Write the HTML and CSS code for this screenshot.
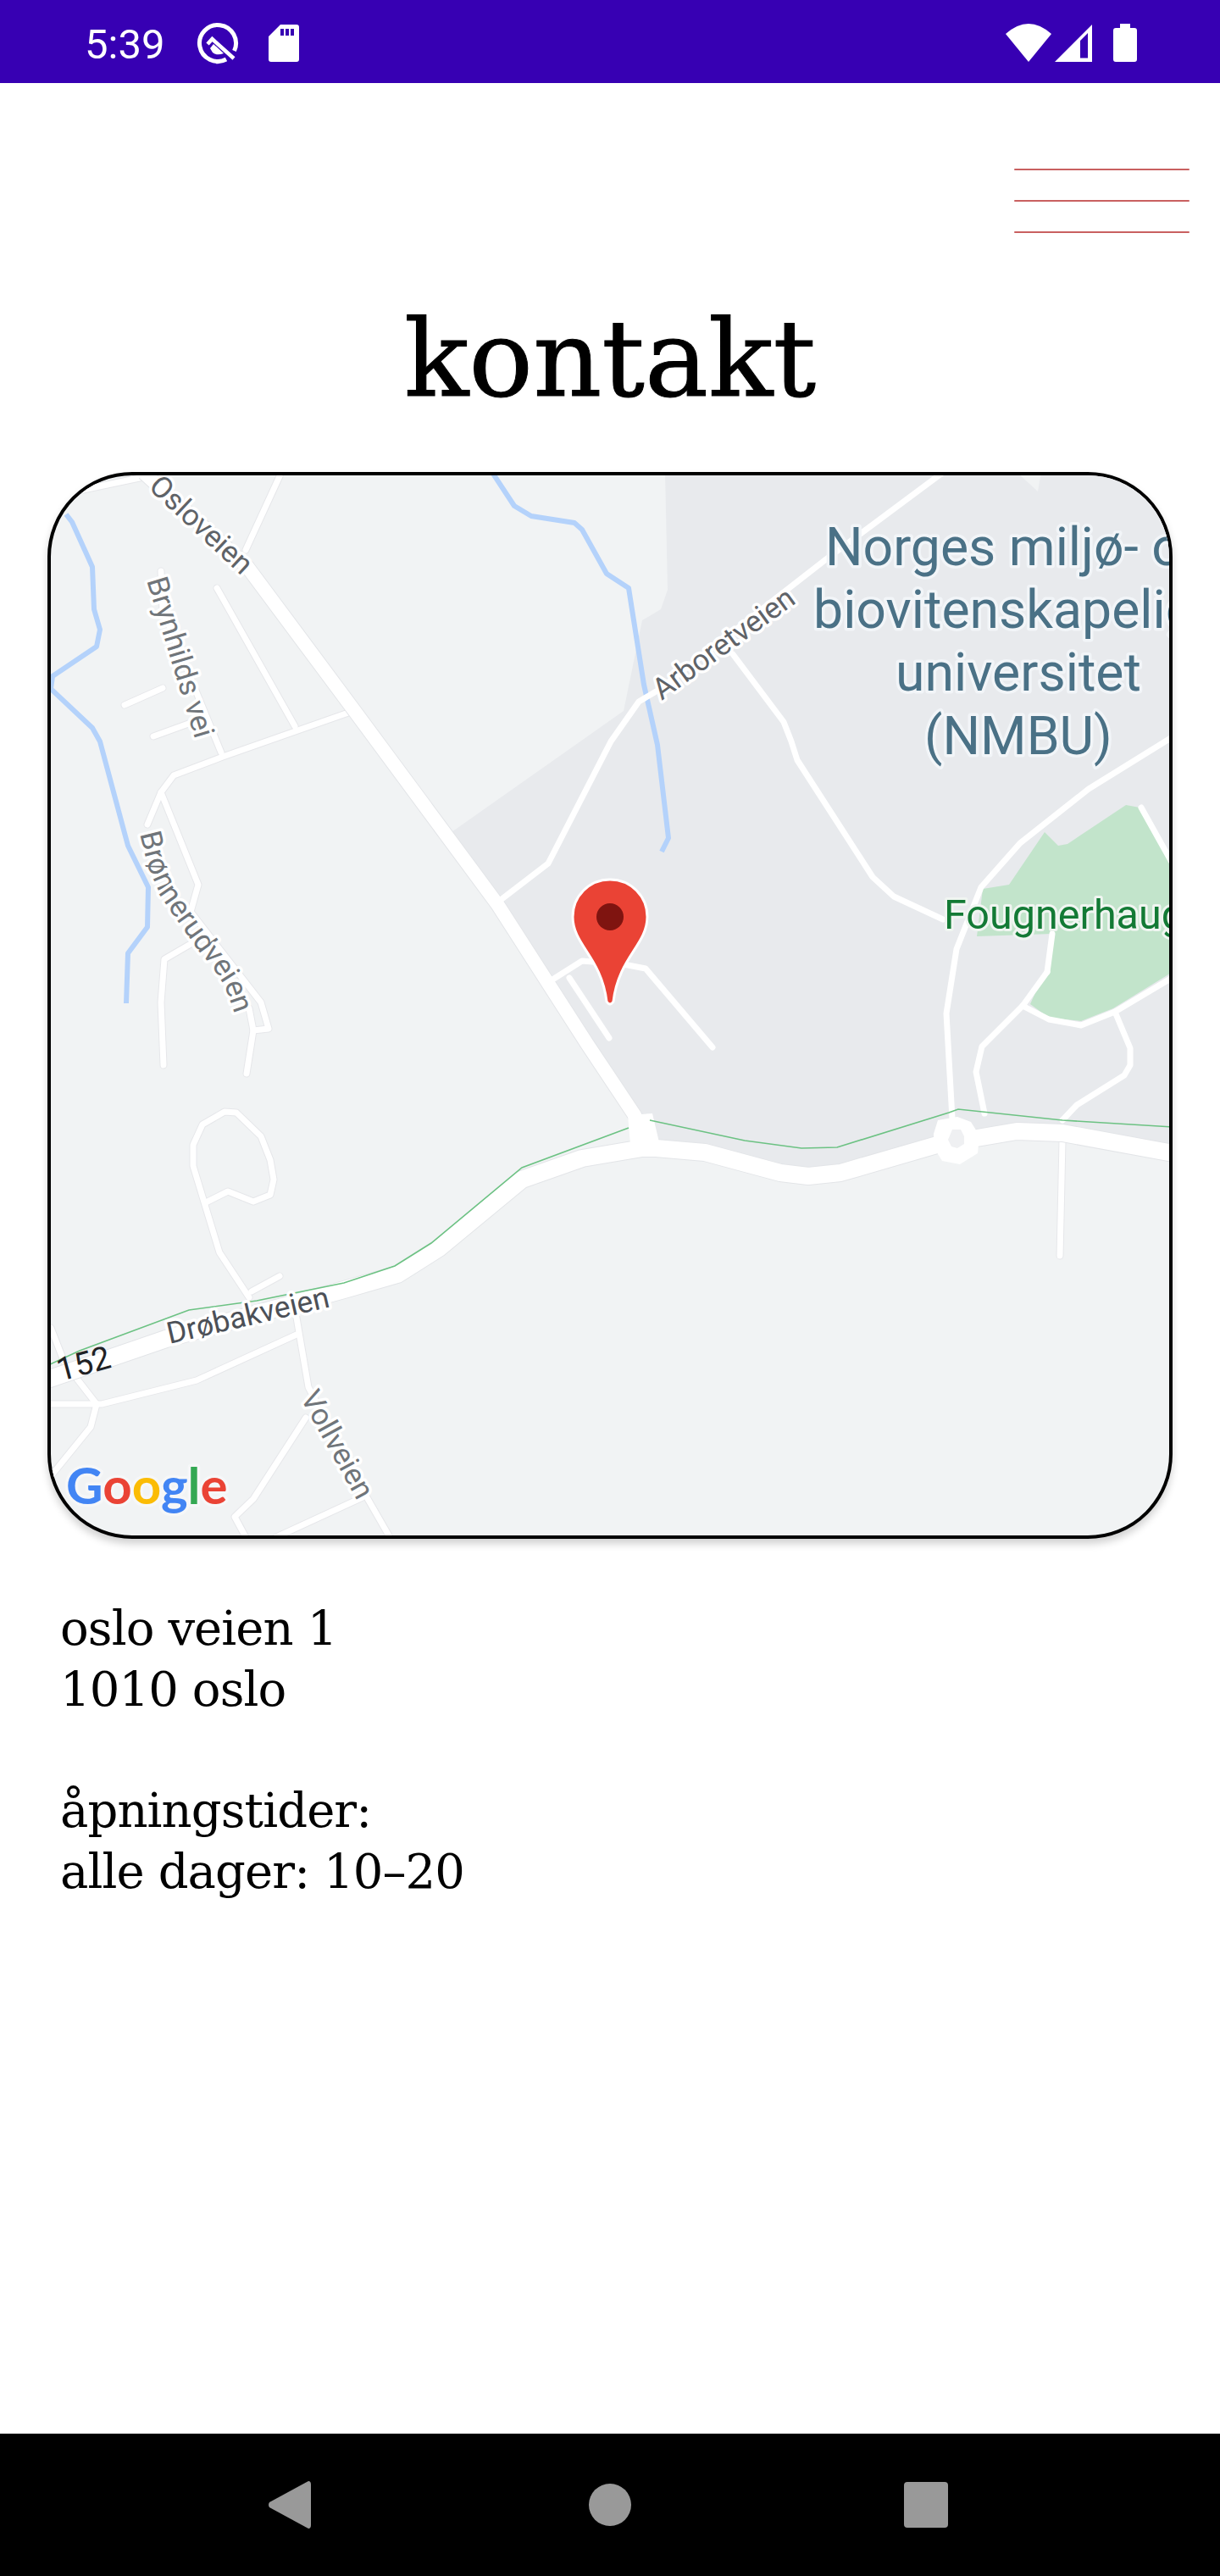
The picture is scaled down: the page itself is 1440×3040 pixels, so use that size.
FILE: index.html
```html
<!DOCTYPE html>
<html lang="no">
<head>
<meta charset="utf-8">
<title>kontakt</title>
<link rel="stylesheet" href="styles.css">
</head>
<body>
<div class="screen">
  <header class="status">
    <div class="status-left">
      <span class="clock">5:39</span>
      <svg class="ico-q" viewBox="0 0 50 50" width="50" height="50">
        <path class="ring" d="M35,44 A21.500,21.500 0 1 1 44.500,34"/>
        <path class="tail-thin" d="M13,26 L18.500,20 L44,43"/>
        <path class="solid" d="M16,31 L20,26 L32,37 Q24,40 19,36 Z"/>
      </svg>
      <svg class="ico-sd" viewBox="0 0 36 44" width="36" height="44">
        <path class="solid" fill-rule="evenodd" d="M14,0 H33 Q36,0 36,3 V41 Q36,44 33,44 H3 Q0,44 0,41 V14 Z M14,5 V13 H18 V5 Z M20,5 V13 H24 V5 Z M26,5 V13 H30 V5 Z"/>
      </svg>
    </div>
    <div class="status-right">
      <svg class="ico-wifi" viewBox="0 0 54 46" width="54" height="46">
        <path class="solid" d="M0,12 Q27,-12 54,12 L27,45 Z"/>
      </svg>
      <svg class="ico-signal" viewBox="0 0 44 44" width="44" height="44">
        <path class="solid" fill-rule="evenodd" d="M0,44 L44,0 V44 Z M30,39.500 H39 V10 L30,19 Z"/>
      </svg>
      <svg class="ico-batt" viewBox="0 0 28 46" width="28" height="46">
        <path class="solid" d="M8,0 H20 V5 H25 Q28,5 28,8 V42 Q28,45 25,45 H3 Q0,45 0,42 V8 Q0,5 3,5 H8 Z"/>
      </svg>
    </div>
  </header>

  <div class="menu-row">
    <div class="menu"><span class="bar"></span><span class="bar"></span><span class="bar"></span></div>
  </div>

  <h1 class="title">kontakt</h1>

  <div class="map">
    <svg class="map-svg" viewBox="60 561 1320 1251" width="1320" height="1251">
      <defs>
        <g id="thin-roads">
          <path d="M290,649 L330,562"/>
          <path d="M98,578 L174,562"/>
          <path d="M256,694 L348,857"/>
          <path d="M417,839 L263,893 L205,915 L190,935 L174,973"/>
          <path d="M190,935 L234,1044 L225,1076 L308,1183 L317,1214 L299,1216"/>
          <path d="M294,1190 L299,1216 L291,1267"/>
          <path d="M225,1114 L194,1132 L190,1183 L193,1257"/>
          <path d="M190,674 L192,720 L261,888"/>
          <path d="M147,832 L192,812"/>
          <path d="M181,869 L228,852"/>
          <path d="M294,1531 L259,1478 L228,1376 L228,1351 L239,1327 L265,1312 L279,1313 L308,1341 L319,1369 L323,1392 L319,1410 L299,1418 L269,1406 L245,1418"/>
          <path d="M297,1524 L330,1506"/>
          <path d="M350,1555 L364,1637 L433,1767 L460,1814"/>
          <path d="M350,1575 L232,1629 L120,1657 L60,1657"/>
          <path d="M60,1567 L76,1608 L114,1657 L107,1684 L60,1742"/>
          <path d="M361,1673 L299,1769 L277,1790 L290,1814"/>
          <path d="M428,1767 L326,1814"/>
          <path d="M1254,1347 L1251,1482"/>
        </g>
      </defs>
      <polygon class="campus" points="785,557 1384,557 1384,1362 1254,1337 1129,1345 992,1384 954,1388 921,1384 832,1360 774,1355 749,1310 587,1067 533,982 736,839 758,732 780,719 788,696"/>
      <polygon class="wedge" points="1200,557 1229,557 1225,580"/>
      <polygon class="park" points="1233,982 1249,998 1260,996 1329,950 1345,953 1384,1022 1384,1147 1314,1190 1276,1205 1238,1201 1216,1185 1233,1147 1242,1102 1153,1105 1160,1049 1191,1044"/>

      <path class="water" d="M78,607 L85,616 L109,669 L111,719 L118,743 L114,763 L62,798 L60,813 L109,859 L118,875 L151,998 L175,1047 L174,1094 L151,1125 L149,1184"/>
      <path class="water" d="M580,556 L607,597 L627,609 L678,617 L687,625 L716,677 L742,694 L760,808 L776,879 L789,989 L781,1005"/>

      <g class="road-case"><use href="#thin-roads"/></g>
      <g class="road-thin"><use href="#thin-roads"/></g>

      <path class="wide-case" d="M170,558 L292,669 L417,837 L587,1067 L693,1232 L749,1316 L767,1351"/>
      <path class="main-case" d="M50,1630 L196,1580 L406,1522 L469,1504 L518,1473 L616,1392 L687,1367 L758,1355 L774,1355 L832,1360 L921,1384 L954,1388 L992,1384 L1106,1351 L1200,1335 L1254,1337 L1390,1362"/>
      <path class="wide" d="M170,558 L292,669 L417,837 L587,1067 L693,1232 L749,1316 L767,1351"/>
      <polygon class="junction" points="741,1316 770,1314 778,1348 745,1362"/>
      <path class="main" d="M50,1630 L196,1580 L406,1522 L469,1504 L518,1473 L616,1392 L687,1367 L758,1355 L774,1355 L832,1360 L921,1384 L954,1388 L992,1384 L1106,1351 L1200,1335 L1254,1337 L1390,1362"/>

      <g class="road-mid">
        <path d="M587,1065 L647,1019 L721,875 L754,828 L776,815 L975,660 L1115,556"/>
        <path d="M865,772 L925,852 L934,875 L941,897 L1030,1035 L1055,1058 L1113,1085"/>
        <path d="M1390,866 L1285,931 L1204,995 L1158,1047 L1129,1120 L1117,1196 L1124,1320"/>
        <path d="M1236,1147 L1242,1102"/>
        <path d="M1207,1187 L1236,1147"/>
        <path d="M1207,1187 L1159,1235 L1152,1265 L1162,1314"/>
        <path d="M1207,1187 L1238,1203 L1276,1210 L1316,1194 L1390,1150"/>
        <path d="M1316,1194 L1334,1237 L1334,1257 L1327,1269 L1271,1304 L1254,1322"/>
        <path d="M1347,953 L1390,1030"/>
        <path d="M649,1158 L687,1134 L736,1138 L762,1143 L841,1236"/>
        <path d="M672,1154 L719,1225"/>
      </g>

      <polygon class="rbt" points="1107,1322 1130,1318 1146,1324 1156,1340 1154,1361 1133,1374 1112,1370 1102,1354 1102,1338"/>
      <polygon class="rbt-core" points="1124,1333 1134,1333 1138,1341 1138,1350 1130,1355 1123,1353 1119,1345"/>

      <polyline class="rail" points="55,1612 94,1594 223,1546 303,1535 406,1514 466,1494 509,1467 616,1378 742,1331"/>
      <polyline class="rail" points="767,1322 879,1346 946,1355 988,1354 1120,1313 1131,1309 1254,1322 1384,1330"/>

      <text class="lbl lbl-dark" transform="translate(174 576) rotate(43)">Osloveien</text>
      <text class="lbl" transform="translate(173 685) rotate(73)">Brynhilds vei</text>
      <path id="bronn" class="none" d="M165,984 L175,1024 L191,1060 L211,1089 L233,1120 L252,1143 L266,1165 L280,1205"/>
      <text class="lbl"><textPath href="#bronn">Brønnerudveien</textPath></text>
      <text class="lbl lbl-dark" transform="translate(781 827) rotate(-36)">Arboretveien</text>
      <text class="lbl lbl-darker" transform="translate(200 1586) rotate(-13)">Drøbakveien</text>
      <text class="lbl lbl-num" transform="translate(71 1630) rotate(-15)">152</text>
      <text class="lbl" transform="translate(354 1649) rotate(61)">Vollveien</text>

      <text class="campus-lbl" x="1202" y="667">Norges miljø- og</text>
      <text class="campus-lbl" x="1202" y="741">biovitenskapelige</text>
      <text class="campus-lbl" x="1202" y="815">universitet</text>
      <text class="campus-lbl" x="1202" y="890">(NMBU)</text>
      <text class="park-lbl" x="1114" y="1096">Fougnerhaugen</text>

      <g class="pin">
        <path class="pin-body" d="M720,1038 C695,1038 676,1058 676,1082 C676,1115 710,1130 716,1182 Q720,1188 724,1182 C730,1130 764,1115 764,1082 C764,1058 745,1038 720,1038 Z"/>
        <circle class="pin-dot" cx="720" cy="1082" r="16"/>
      </g>

      <text class="goog" x="78" y="1775"><tspan class="g-b">G</tspan><tspan class="g-r">o</tspan><tspan class="g-y">o</tspan><tspan class="g-b">g</tspan><tspan class="g-g">l</tspan><tspan class="g-r">e</tspan></text>
    </svg>
  </div>

  <div class="address">
    <p class="para">oslo veien 1<br>1010 oslo</p>
    <p class="para">åpningstider:<br>alle dager: 10–20</p>
  </div>

  <nav class="navbar">
    <svg class="nav-ico" viewBox="0 0 50 56" width="50" height="56"><path d="M47,0 Q50,0 50,4 V52 Q50,56 47,56 L1,31 Q-1,28 1,25 Z"/></svg>
    <span class="nav-circle"></span>
    <span class="nav-square"></span>
  </nav>
</div>
</body>
</html>
```

FILE: styles.css
```css
* { box-sizing: border-box; }
html, body { margin: 0; padding: 0; background: #fff; }
.screen { width: 1440px; height: 3040px; display: flex; flex-direction: column; overflow: hidden; }

.status { height: 98px; flex: none; background: #3700b3; display: flex; justify-content: space-between; align-items: flex-start; padding: 0 98px 0 100px; }
.status-left { display: flex; align-items: center; height: 98px; }
.clock { font: 400 49px/1 Roboto, sans-serif; color: #fff; width: 132px; padding-top: 6px; }
.ico-q { flex: none; margin-top: 4px; }
.ico-sd { margin-left: 35px; flex: none; margin-top: 4px; }
.status-right { display: flex; align-items: flex-start; padding-top: 28px; }
.ico-wifi { flex: none; }
.ico-signal { flex: none; margin-left: 4px; margin-top: 1px; }
.ico-batt { flex: none; margin-left: 25px; }
.solid { fill: #fff; }
.ring { fill: none; stroke: #fff; stroke-width: 5; }
.tail-thin { fill: none; stroke: #fff; stroke-width: 4.5; }

.menu-row { flex: none; display: flex; justify-content: flex-end; padding: 101px 36px 0 0; }
.menu { width: 207px; display: flex; flex-direction: column; gap: 35px; }
.bar { display: block; height: 2px; background: #c96060; border-radius: 1px; }

.title { margin: 74px 0 0; font: 400 126px/150px "DejaVu Serif", serif; -webkit-text-stroke: 1px #000; text-align: center; color: #000; flex: none; height: 208px; }

.map { flex: none; margin: 0 56px; width: 1328px; height: 1259px; border: 4px solid #000; border-radius: 100px; overflow: hidden; background: #f1f3f4; box-shadow: 0 6px 10px rgba(0,0,0,.18); }
.map-svg { display: block; }
.campus { fill: #e8eaed; }
.wedge { fill: #f1f3f4; }
.park { fill: #c2e4cb; }
.water { fill: none; stroke: #b4d2fb; stroke-width: 6; stroke-linejoin: round; }
.road-case { fill: none; stroke: #e6e7ea; stroke-width: 9; stroke-linecap: round; stroke-linejoin: round; }
.road-thin { fill: none; stroke: #fff; stroke-width: 7; stroke-linecap: round; stroke-linejoin: round; }
.road-mid { fill: none; stroke: #fff; stroke-width: 7; stroke-linecap: round; stroke-linejoin: round; }
.wide-case { fill: none; stroke: #e3e5e8; stroke-width: 18; }
.wide { fill: none; stroke: #fff; stroke-width: 16; }
.main-case { fill: none; stroke: #e3e5e8; stroke-width: 22; stroke-linejoin: round; }
.main { fill: none; stroke: #fff; stroke-width: 20; stroke-linejoin: round; }
.junction { fill: #fff; }
.rbt { fill: #fff; }
.rbt-core { fill: #eff0f2; }
.rail { fill: none; stroke: #6cc283; stroke-width: 1.6; }
.none { fill: none; stroke: none; }

.lbl { font: 400 35px Roboto, sans-serif; fill: #70757a; stroke: #fff; stroke-width: 7px; stroke-linejoin: round; paint-order: stroke; }
.lbl-dark { fill: #5f6368; }
.lbl-darker { fill: #4c5057; font-size: 35.5px; }
.lbl-num { font-size: 38px; fill: #202124; stroke: none; }
.campus-lbl { font: 400 62.5px Roboto, sans-serif; fill: #4a7186; stroke: #f2f5f8; stroke-width: 7px; stroke-linejoin: round; paint-order: stroke; text-anchor: middle; }
.park-lbl { font: 400 48.5px Roboto, sans-serif; fill: #137a35; stroke: #f0f5f1; stroke-width: 6px; stroke-linejoin: round; paint-order: stroke; }
.pin-body { fill: #ea4335; stroke: #fff; stroke-width: 3; }
.pin-dot { fill: #7f1410; }
.goog { font: 700 60px Lato, sans-serif; stroke: #f6f7f8; stroke-width: 7px; stroke-linejoin: round; paint-order: stroke; }
.g-b { fill: #4285f4; }
.g-r { fill: #ea4335; }
.g-y { fill: #fbbc05; }
.g-g { fill: #34a853; }

.address { flex: 1; padding: 70px 0 0 71px; font: 400 56px/72px "DejaVu Serif", serif; letter-spacing: -0.9px; color: #000; }
.para { margin: 0 0 71px; }

.navbar { flex: none; height: 168px; background: #000; position: relative; display: grid; grid-template-columns: 317px 50px 328px 50px 322px 52px; align-items: center; }
.nav-ico { grid-column: 2; fill: #999; }
.nav-circle { grid-column: 4; width: 50px; height: 50px; border-radius: 50%; background: #999; }
.nav-square { grid-column: 6; width: 52px; height: 54px; border-radius: 4px; background: #999; }
```
